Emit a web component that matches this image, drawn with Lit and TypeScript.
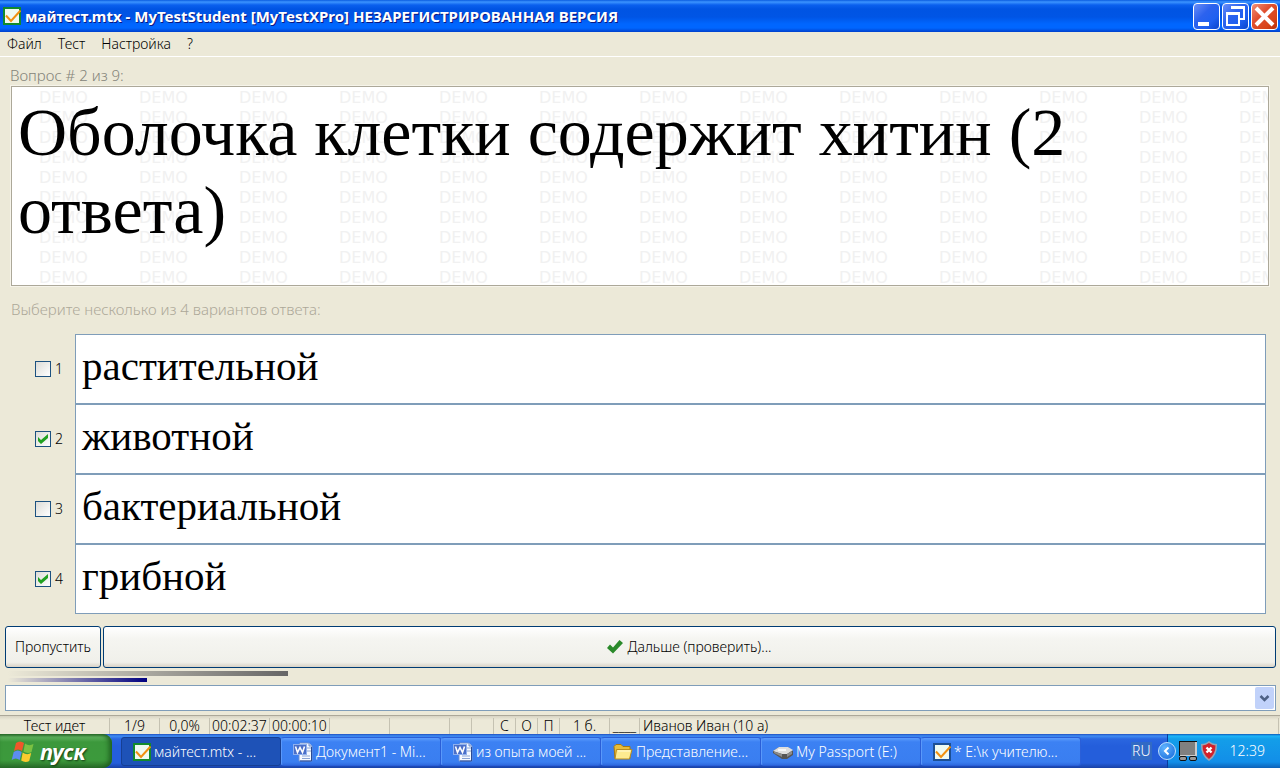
import { LitElement, html, svg, css } from "lit";
import { customElement, state } from "lit/decorators.js";

const FONT = css`"Noto Sans", "Open Sans", sans-serif`;

const appIcon = (edge: string) => svg`
  <svg class="ico" viewBox="0 0 18 18" width="18" height="18" aria-hidden="true">
    <rect x="1" y="1" width="16" height="16" fill="#eefaf2" stroke=${edge} stroke-width="2"/>
    <path d="M3 8.500 8 14 17.500 3.500" fill="none" stroke="#f09010" stroke-width="2"/>
  </svg>`;

const wordIcon = svg`
  <svg class="ico" viewBox="0 0 20 20" width="20" height="20" aria-hidden="true">
    <path d="M7 1h9l3 3v15H6V2z" fill="#f6faff" stroke="#6c8fd0"/>
    <path d="M16 1v3h3" fill="#c4d6f4" stroke="#6c8fd0"/>
    <path d="M18.500 5v14H7" fill="none" stroke="#2c4a94"/>
    <path d="M9 14h8M9 16.500h8M14 6h4M14 9h4" stroke="#8aa4d4"/>
    <rect x="0.500" y="2.500" width="13" height="10" fill="#4a6fc8" stroke="#8fb0ee"/>
    <path d="M2.500 4.500 4.500 10.500 7 5.500 9.500 10.500 11.500 4.500" fill="none" stroke="#fff" stroke-width="1.600"/>
  </svg>`;

const folderIcon = svg`
  <svg class="ico" viewBox="0 0 20 18" width="20" height="18" aria-hidden="true">
    <path d="M1 3.500 3 1.500h5l2 2h7v12H2z" fill="#e9bd3a" stroke="#a87a10"/>
    <path d="M3.500 6.500H19l-2.500 9.500H2z" fill="#fdeb90" stroke="#b98c1c"/>
    <path d="M5 8h12" stroke="#fffbd8"/>
  </svg>`;

const driveIcon = svg`
  <svg class="ico" viewBox="0 0 20 14" width="20" height="14" aria-hidden="true">
    <path d="M0 6 6 2h9l5 4v4l-6 4H9L0 8z" fill="#555"/>
    <path d="M0 6 6 2h9l5 3-6 4H9z" fill="#dedede"/>
    <path d="M1 6.500 9 9v3L1 8zM14 9l5-3v3l-5 3z" fill="#8c8c8c"/>
    <path d="M5 5h8" stroke="#fff" stroke-width="1.500"/>
  </svg>`;

const flagIcon = svg`
  <svg viewBox="0 0 24 24" width="24" height="24" aria-hidden="true">
    <path d="M5 4q4-3 8 0l-2 8q-4-3-8 0z" fill="#f0562a"/>
    <path d="M14 4.500q4 3 8.500.500l-2 8q-4 2-8-.500z" fill="#7cc142"/>
    <path d="M2.700 13q4-3 8 0l-2 8q-4-3-8 0z" fill="#5c8df0"/>
    <path d="M11.700 13.500q4 3 8.500.500l-2 8q-4 2-8-.500z" fill="#fccb2e"/>
  </svg>`;

const checkIcon = svg`
  <svg viewBox="0 0 16 14" width="16" height="14" aria-hidden="true">
    <path d="M0 8 3 4.500l3 3L12.500 0 16 3 6 13.500z" fill="#2a8a2a"/>
  </svg>`;

const trayIcons = svg`
  <svg viewBox="0 0 18 20" width="18" height="20" aria-hidden="true">
    <rect width="18" height="15" fill="#111"/>
    <rect x="1" y="1" width="16" height="13" fill="#808080"/>
    <path d="M16 1h2v14H1v-1h15z" fill="#ccc"/>
    <rect x="0.500" y="15.500" width="7" height="4" rx="1.500" fill="#999" stroke="#111"/>
    <rect x="10.500" y="15.500" width="7" height="4" rx="1.500" fill="#999" stroke="#111"/>
  </svg>
  <svg viewBox="0 0 18 20" width="18" height="20" aria-hidden="true">
    <path d="M1 3q5 0 8-3 3 3 8 3 .500 12-8 17Q.500 15 1 3z" fill="#9aa4b4"/>
    <path d="M2.500 4.500Q6 4 9 2q3 2 6.500 2.500 0 9-6.500 13.500Q2.500 13.500 2.500 4.500z" fill="#d3202a"/>
    <path d="M6.500 6.500l5 5m0-5-5 5" stroke="#fff" stroke-width="2.400"/>
  </svg>`;

@customElement("app-root")
export class AppRoot extends LitElement {
  @state() private answers = [
    { text: "растительной", checked: false },
    { text: "животной", checked: true },
    { text: "бактериальной", checked: false },
    { text: "грибной", checked: true },
  ];

  private status = [
    ["c w109", "Тест идет"], ["c w50", "1/9"], ["c w50", "0,0%"], ["w60", "00:02:37"],
    ["w60", "00:00:10"], ["w60", ""], ["w60", ""], ["w22", ""], ["w22", ""],
    ["c w22", "С"], ["c w22", "О"], ["c w22", "П"], ["c w50", "1 б."], ["c w30", "____"],
    ["last", "Иванов Иван (10 а)"],
  ];

  private tasks = [
    { icon: appIcon("#128a2c"), text: "майтест.mtx - ...", active: true },
    { icon: wordIcon, text: "Документ1 - Mi..." },
    { icon: wordIcon, text: "из опыта моей ..." },
    { icon: folderIcon, text: "Представление..." },
    { icon: driveIcon, text: "My Passport (E:)" },
    { icon: appIcon("#1c4f94"), text: "* E:\\к учителю..." },
  ];

  static styles = css`
    :host {
      display: flex;
      flex-direction: column;
      min-height: 100vh;
      background: #ece9d8;
      color: #000;
      font: 300 14px/18px ${FONT};
    }
    * { box-sizing: border-box; }
    button, select, input { font: inherit; color: inherit; margin: 0; }
    svg { display: block; flex: none; }

    .title {
      display: flex;
      align-items: center;
      height: 32px;
      padding: 0 2px 0 3px;
      gap: 4px;
      background: linear-gradient(#0a5ce0 0, #3c94ff 2px, #0a60ee 5px, #0054e3 9px, #0055e5 17px, #0066ff 24px, #0066ff 28px, #0040cc 32px);
    }
    h1 {
      flex: 1;
      margin: 0;
      font: 700 15px/20px ${FONT};
      color: #fff;
      text-shadow: 1px 1px 0 #0a1883;
      white-space: nowrap;
    }
    .win { display: flex; gap: 2px; }
    .win button {
      width: 27px;
      height: 27px;
      padding: 0;
      border: 1px solid #fff;
      border-radius: 4px;
      background: linear-gradient(135deg, #6a8ef8, #2c62ee 40%, #1f60f0 70%, #0a44cc);
    }
    .win .close { background: linear-gradient(135deg, #f09078, #e05030 40%, #d84418 75%, #b83008); }

    .menu {
      display: flex;
      gap: 16px;
      height: 25px;
      padding: 3px 7px;
      border-bottom: 1px solid #fff;
    }
    .menu button { padding: 0; border: 0; background: none; }

    main { flex: 1; display: flex; flex-direction: column; }
    .caption { margin: 9px 10px 2px; font-size: 15px; color: #84847a; }
    .question {
      position: relative;
      height: 200px;
      margin: 0 11px;
      padding: 6px;
      overflow: hidden;
      border: 1px solid #aca899;
      background: #fff;
      outline: 1px solid #f6f4ea;
    }
    .question p {
      position: relative;
      margin: 0;
      font: 68px/78px "Liberation Serif", serif;
    }
    .marks {
      position: absolute;
      inset: 2px 0 0 27px;
      display: grid;
      grid-template-columns: repeat(13, 100px);
      grid-auto-rows: 20px;
      font: 16px/18px "DejaVu Sans", sans-serif;
      color: #f1f1f1;
    }
    fieldset { border: 0; padding: 0; margin: 14px 0 0; min-width: 0; }
    legend { padding: 0; margin: 0 11px 16px; font-size: 15px; color: #aca899; }
    .answers { margin-right: 14px; }
    .answer {
      display: grid;
      grid-template-columns: 16px 16px minmax(0, 1fr);
      column-gap: 4px;
      align-items: center;
      padding-left: 35px;
    }
    .answer input {
      appearance: none;
      width: 16px;
      height: 16px;
      border: 1px solid #1c5180;
      background: linear-gradient(135deg, #dcdcd7, #fff);
    }
    .answer input:checked {
      background:
        url("data:image/svg+xml,%3Csvg xmlns='http://www.w3.org/2000/svg' viewBox='0 0 14 14'%3E%3Cpath d='M2 5l3 3 7-6v4l-7 6-3-3z' fill='%2321a121'/%3E%3C/svg%3E"),
        linear-gradient(135deg, #dcdcd7, #fff);
    }
    .answer .text {
      height: 70px;
      padding: 7px 6px;
      border: 1px solid #7f9db9;
      background: #fff;
      font: 41px/48px "Liberation Serif", serif;
    }

    .actions { display: flex; gap: 2px; margin: 12px 4px 3px 5px; }
    .actions button {
      display: flex;
      align-items: center;
      justify-content: center;
      gap: 4px;
      height: 42px;
      padding: 0 7px;
      border: 1px solid #003c74;
      border-radius: 3px;
      background: linear-gradient(#fff, #f5f5f1 30%, #f0f0ea 88%, #d8d2c6);
      white-space: nowrap;
    }
    .actions .skip { width: 96px; }
    .actions .next { flex: 1; }
    .bars { display: grid; row-gap: 2px; margin: 0 8px 3px; }
    .bar { height: 4px; }
    .bar.time { height: 5px; background: linear-gradient(90deg, #ece9d8, #666); }
    .bar.done { background: linear-gradient(90deg, #ece9d8, #000080); }
    .combo { display: grid; margin: 0 4px 4px 5px; }
    .combo select {
      appearance: none;
      height: 26px;
      border: 1px solid #7f9db9;
      border-radius: 0;
      background:
        url("data:image/svg+xml,%3Csvg xmlns='http://www.w3.org/2000/svg' viewBox='0 0 19 22'%3E%3Crect width='19' height='22' rx='2' fill='%23c1d2fa'/%3E%3Cpath d='M5.500 9l4 4 4-4' fill='none' stroke='%234d6185' stroke-width='2.500'/%3E%3C/svg%3E")
          right 1px center / 19px 22px no-repeat,
        #fff;
    }

    .status {
      display: flex;
      height: 19px;
      padding: 2px 1px 0 0;
      border-top: 1px solid #aca899;
      background: linear-gradient(#d8d4c4, #ece9d8 4px);
      line-height: 16px;
      white-space: nowrap;
    }
    .status span { flex: none; padding-left: 2px; border-right: 1px solid #c5c2b2; }
    .status .c { padding: 0; text-align: center; }
    .status .w109 { width: 110px; }
    .status .w60 { width: 60px; }
    .status .w50 { width: 50px; }
    .status .w30 { width: 30px; }
    .status .w22 { width: 22px; }
    .status .last { flex: 1; padding-left: 3px; }

    .taskbar {
      display: flex;
      align-items: stretch;
      height: 34px;
      color: #fff;
      background: linear-gradient(#1f4fc0 0, #3f8cf3 2px, #2a66e0 5px, #245edb 12px, #245edb 29px, #1941a5 34px);
    }
    .start {
      display: flex;
      align-items: center;
      gap: 5px;
      width: 112px;
      padding: 0 0 0 11px;
      border: 0;
      border-radius: 0 9px 9px 0;
      background: linear-gradient(#2f7030, #5eb25e 3px, #3c983c 8px, #3c9a3c 26px, #2a6f2a 34px);
      box-shadow: inset -3px 0 5px #1f6020;
      font: italic 700 22px/28px ${FONT};
      color: #fff;
      text-shadow: 1px 1px 2px #123a12;
    }
    .tasks { display: flex; flex: 1; min-width: 0; padding: 3px 0 2px 9px; }
    .tasks button {
      display: flex;
      align-items: center;
      gap: 3px;
      flex: 0 1 160px;
      min-width: 0;
      padding: 0 11px;
      border: 1px solid #2a5fd8;
      border-left-color: #5a98fa;
      border-radius: 3px;
      background: linear-gradient(#5c9cfc, #3c81f3 4px, #3a7ef0 24px, #2f6be0);
      color: #fff;
      white-space: nowrap;
    }
    .tasks .active { background: #1e52b7; border-color: #163f94; }
    .lang { align-self: center; padding: 0 1px; background: #316ac5; margin-right: 5px; }
    .tray {
      display: flex;
      align-items: center;
      gap: 3px;
      margin-left: 10px;
      padding-right: 15px;
      border-left: 1px solid #0a3c9c;
      background: linear-gradient(#0c59b9 0, #1cb4f8 2px, #139ee9 5px, #128ee8 28px, #0d61b8 34px);
    }
    .tray button {
      width: 18px;
      height: 18px;
      margin-left: -10px;
      padding: 0;
      border: 1px solid #bfe0ff;
      border-radius: 50%;
      background: radial-gradient(circle at 35% 30%, #5fb4ff, #1466d8);
    }
    time { margin-left: 9px; }
  `;

  private toggle(i: number) {
    this.answers = this.answers.map((a, k) => (k === i ? { ...a, checked: !a.checked } : a));
  }

  render() {
    return html`
      <header class="title">
        ${appIcon("#128a2c")}
        <h1>майтест.mtx - MyTestStudent [MyTestXPro] НЕЗАРЕГИСТРИРОВАННАЯ ВЕРСИЯ</h1>
        <div class="win">
          <button aria-label="Свернуть"><svg viewBox="0 0 25 25" width="25" height="25"><path d="M4 18h11v4H4z" fill="#fff"/></svg></button>
          <button aria-label="Восстановить"><svg viewBox="0 0 25 25" width="25" height="25"><path d="M8 3.500h13V15h-4" fill="none" stroke="#fff" stroke-width="2"/><path d="M8 3.500h14M3 9.500h14" stroke="#fff" stroke-width="3"/><path d="M4 9v12h12V9" fill="none" stroke="#fff" stroke-width="2"/></svg></button>
          <button class="close" aria-label="Закрыть"><svg viewBox="0 0 25 25" width="25" height="25"><path d="M4 4 21 21M21 4 4 21" stroke="#fff" stroke-width="4"/></svg></button>
        </div>
      </header>
      <nav class="menu">
        ${["Файл", "Тест", "Настройка", "?"].map((m) => html`<button>${m}</button>`)}
      </nav>
      <main>
        <div class="caption">Вопрос # 2 из 9:</div>
        <section class="question">
          <div class="marks" aria-hidden="true">${Array.from({ length: 130 }, () => html`<span>DEMO</span>`)}</div>
          <p>Оболочка клетки содержит хитин (2 ответа)</p>
        </section>
        <fieldset>
          <legend>Выберите несколько из 4 вариантов ответа:</legend>
          <div class="answers">
            ${this.answers.map((a, i) => html`
              <label class="answer">
                <input type="checkbox" .checked=${a.checked} @change=${() => this.toggle(i)} />
                <span>${i + 1}</span>
                <span class="text">${a.text}</span>
              </label>`)}
          </div>
        </fieldset>
        <div class="actions">
          <button class="skip">Пропустить</button>
          <button class="next">${checkIcon}Дальше (проверить)...</button>
        </div>
        <div class="bars">
          <div class="bar time" style="width:22.15%"></div>
          <div class="bar done" style="width:11%"></div>
        </div>
        <div class="combo"><select aria-label="Список вопросов"><option></option></select></div>
      </main>
      <footer class="status">
        ${this.status.map(([c, t]) => html`<span class=${c}>${t}</span>`)}
      </footer>
      <div class="taskbar">
        <button class="start">${flagIcon}пуск</button>
        <div class="tasks">
          ${this.tasks.map((t) => html`<button class=${t.active ? "active" : ""}>${t.icon}${t.text}</button>`)}
        </div>
        <span class="lang">RU</span>
        <div class="tray">
          <button aria-label="Скрытые значки"><svg viewBox="0 0 16 16" width="16" height="16"><path d="M9.500 4.500 6 8l3.500 3.500" fill="none" stroke="#fff" stroke-width="2"/></svg></button>
          ${trayIcons}
          <time>12:39</time>
        </div>
      </div>
    `;
  }
}
